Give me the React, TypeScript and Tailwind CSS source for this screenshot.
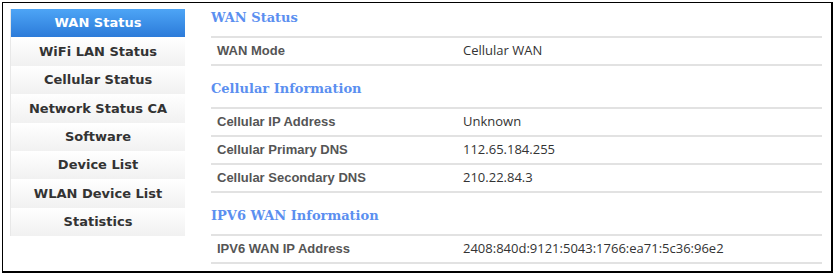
const menu = [
  "WAN Status",
  "WiFi LAN Status",
  "Cellular Status",
  "Network Status CA",
  "Software",
  "Device List",
  "WLAN Device List",
  "Statistics",
];

const sections: { title: string; rows: [string, string][] }[] = [
  { title: "WAN Status", rows: [["WAN Mode", "Cellular WAN"]] },
  {
    title: "Cellular Information",
    rows: [
      ["Cellular IP Address", "Unknown"],
      ["Cellular Primary DNS", "112.65.184.255"],
      ["Cellular Secondary DNS", "210.22.84.3"],
    ],
  },
  {
    title: "IPV6 WAN Information",
    rows: [["IPV6 WAN IP Address", "2408:840d:9121:5043:1766:ea71:5c36:96e2"]],
  },
];

export default function App() {
  return (
    <div className="h-[277px] w-[836px] bg-white pl-[2px] pt-[2px]">
      <div className="flex h-[271px] w-[831px] gap-[26px] border-t border-r-2 border-b-2 border-l border-black pl-[7px] pr-[9px]">
        {/* left menu */}
        <div className="mt-[6px] w-[175px] shrink-0 self-start border-l border-[#e8e8e8]">
          {menu.map((item, i) => (
            <div
              key={item}
              className={
                i === 0
                  ? "flex h-[28.4px] items-center justify-center bg-gradient-to-b from-[#4da5f6] to-[#2c7bd9] text-[13px] font-bold text-white"
                  : "flex h-[28.4px] items-center justify-center bg-gradient-to-b from-[#ffffff] to-[#f1f1f1] text-[13px] font-bold text-[#333]"
              }
              style={{ fontFamily: '"DejaVu Sans", Verdana, sans-serif' }}
            >
              {item}
            </div>
          ))}
        </div>

        {/* status tables */}
        <div className="flex-1">
          {sections.map((s, i) => (
            <div key={s.title} className={i === 0 ? "" : "mt-[8px]"}>
              <h3
                className="h-[33px] pt-[6px] text-[13px] font-bold leading-[18px] text-[#5b8ff0]"
                style={{ fontFamily: '"DejaVu Serif", Georgia, serif' }}
              >
                {s.title}
              </h3>
              <div className="border-b-2 border-[#e2e2e2]">
                {s.rows.map(([label, value]) => (
                  <div
                    key={label}
                    className="flex h-[28px] items-center border-t-2 border-[#e2e2e2]"
                  >
                    <div
                      className="w-[252px] pl-[6px] text-[13px] font-bold text-[#555]"
                      style={{ fontFamily: '"Liberation Sans", Arial, sans-serif' }}
                    >
                      {label}
                    </div>
                    <div
                      className="text-[13px] text-[#333]"
                      style={{ fontFamily: '"Open Sans", sans-serif' }}
                    >
                      {value}
                    </div>
                  </div>
                ))}
              </div>
            </div>
          ))}
        </div>
      </div>
    </div>
  );
}
